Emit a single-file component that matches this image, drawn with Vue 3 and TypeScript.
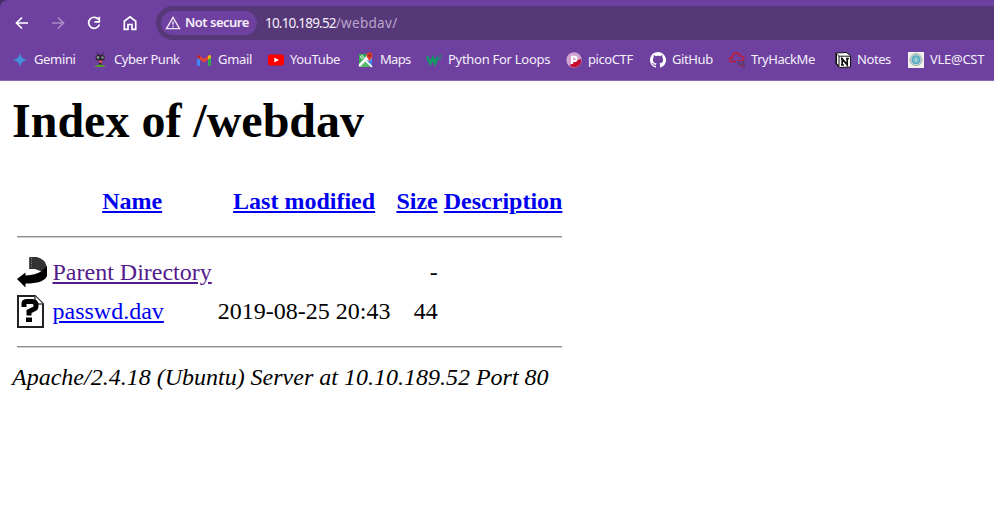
<script setup lang="ts">
interface Bookmark { label: string; icon: string; spacing: number }
const bookmarks: Bookmark[] = [
  { label: 'Gemini', icon: 'gemini', spacing: -0.35 },
  { label: 'Cyber Punk', icon: 'punk', spacing: -0.42 },
  { label: 'Gmail', icon: 'gmail', spacing: -0.3 },
  { label: 'YouTube', icon: 'youtube', spacing: -0.36 },
  { label: 'Maps', icon: 'maps', spacing: -0.7 },
  { label: 'Python For Loops', icon: 'w3', spacing: -0.28 },
  { label: 'picoCTF', icon: 'pico', spacing: -0.42 },
  { label: 'GitHub', icon: 'github', spacing: -0.38 },
  { label: 'TryHackMe', icon: 'thm', spacing: -0.45 },
  { label: 'Notes', icon: 'notion', spacing: -0.42 },
  { label: 'VLE@CST', icon: 'vle', spacing: -0.28 },
]
</script>

<template>
  <div class="window">
    <header class="chrome">
      <div class="toolbar">
        <nav class="controls">
          <svg viewBox="0 0 16 16"><path d="M14 8H3M8 2.5 2.5 8 8 13.5" /></svg>
          <svg class="disabled" viewBox="0 0 16 16"><path d="M2 8h11M8 2.5 13.5 8 8 13.5" /></svg>
          <svg viewBox="0 0 16 16"><path d="M12.8 4.8A5.500 5.500 0 1 0 13.400 9.500" /><path d="M13.300 1.800v5H8.500" /></svg>
          <svg viewBox="0 0 16 16"><path d="M2.300 6.200 8 1.900l5.700 4.300v8.200h-3.700V9.500H6v4.900H2.300z" /></svg>
        </nav>
        <div class="omnibox">
          <div class="chip">
            <svg viewBox="0 0 16 16"><path d="M8 2.300 14.500 13.600H1.500z" /><path d="M8 6.500v3.300M8 10.700v1.500" /></svg>
            <span>Not secure</span>
          </div>
          <div class="url">10.10.189.52<span>/webdav/</span></div>
        </div>
      </div>
      <div class="bookmarks">
        <div v-for="b in bookmarks" :key="b.label" class="bookmark">
          <svg viewBox="0 0 16 16">
            <path v-if="b.icon === 'gemini'" fill="#438fdc" d="M8 1c1 4.200 2.800 6 7 7-4.200 1-6 2.800-7 7-1-4.200-2.800-6-7-7 4.200-1 6-2.800 7-7z" />
            <g v-else-if="b.icon === 'punk'">
              <path d="M4.500 .5 7 3M12 .5 9.500 3" stroke="#291d35" />
              <path fill="#292531" d="M5 3h6l2 2-1 3-2 1v4H7V9L4 8 3.500 5z" />
              <circle cx="6" cy="5.500" r="1.400" fill="#8d8a92" /><circle cx="10.500" cy="5.500" r="1.300" fill="#8d8a92" />
              <path fill="#e45164" d="M6.500 8.500h4l-1 3-2-1z" /><path fill="#569d35" d="M3 14q5-3 10 0v1H3z" />
            </g>
            <g v-else-if="b.icon === 'gmail'">
              <path fill="#4285f4" d="M1 4.500V13q0 1 1 1h2V7z" /><path fill="#34a853" d="M12 7v7h2q1 0 1-1V4.500z" />
              <path fill="#ea4335" d="m4 4 4 3 4-3v3.500l-4 3-4-3z" /><path fill="#c5221f" d="M1 4.500Q1.500 2 4 4v3.500L1 5.400z" /><path fill="#fbbc04" d="M12 4q2.500-2 3 .5v.9l-3 2.100z" />
            </g>
            <g v-else-if="b.icon === 'youtube'"><rect y="2.500" width="16" height="11" rx="2" fill="#f00" /><path fill="#fff" d="m6.300 5.600 4.500 2.400-4.500 2.400z" /></g>
            <g v-else-if="b.icon === 'maps'">
              <rect x="1" y="2" width="13" height="13" rx="1.500" fill="#e8eaed" /><path fill="#34a853" d="M1 2h9L1 12z" /><path fill="#4285f4" d="m8 8 6 6v-8l-3 3z" /><path fill="#54b86a" d="m2 15 6-6 6 6z" /><path stroke="#fff" stroke-width="1.600" d="m1 14 10-10M7 8l7 7" />
              <path fill="#d83b30" d="M11.500 10C11 7 8.500 6 8.500 3.500a3 3 0 0 1 6 0c0 2.500-2.500 3.500-3 6.500z" /><circle cx="11.500" cy="3.600" r="1.100" fill="#8b1a1a" /><circle cx="4" cy="5" r="1.400" stroke="#fff" fill="none" stroke-width=".8" />
            </g>
            <g v-else-if="b.icon === 'w3'"><path d="m1 4.500 3.300 7L7 6l2 5.500 3-6.500" stroke="#119964" stroke-width="2.600" fill="none" /><path d="M13 3h2l-1 1.500 1 1.500-2 1" stroke="#119964" fill="none" /></g>
            <g v-else-if="b.icon === 'pico'"><circle cx="8" cy="8" r="7.700" fill="#d1a3d3" /><path fill="#c70b32" d="m4 13 7-5 4-1a7 7 0 0 1-11 7z" /><path d="M6 12V4.800h2.500a2 2 0 0 1 0 4.200H6" stroke="#fff" stroke-width="2" fill="none" /></g>
            <path v-else-if="b.icon === 'github'" fill="#fff" d="M8 0C3.580 0 0 3.580 0 8c0 3.540 2.290 6.530 5.470 7.590.4.070.55-.17.55-.38 0-.19-.01-.82-.01-1.490-2.010.37-2.530-.49-2.690-.94-.09-.23-.48-.94-.82-1.130-.28-.15-.68-.52-.01-.53.63-.01 1.080.58 1.230.82.72 1.210 1.870.87 2.330.66.07-.52.28-.87.51-1.070-1.780-.2-3.640-.89-3.640-3.950 0-.87.31-1.590.82-2.150-.08-.2-.36-1.020.08-2.120 0 0 .67-.21 2.200.82.64-.18 1.320-.27 2-.27s1.360.09 2 .27c1.530-1.040 2.200-.82 2.200-.82.44 1.100.16 1.920.08 2.120.51.56.82 1.270.82 2.150 0 3.070-1.870 3.750-3.650 3.950.29.25.54.73.54 1.480 0 1.070-.01 1.930-.01 2.200 0 .21.15.46.55.38A8 8 0 0 0 8 0z" />
            <g v-else-if="b.icon === 'thm'"><path d="M7 9.500H2.500a2 2 0 0 1 0-4c.500 0 1 .2 1 .2 0-3 1.500-4.700 3.500-4.700 2 0 3.500 1.200 4 3.200 2.500-.5 4 1 3.800 3-.2 1-1 1.300-2 1.300" stroke="#c01a31" stroke-width="1.400" fill="none" /><path d="M8 10.500h3M12 10.500h4M9 12.500h3M13 12.500h3M12 15h4" stroke="#513c6d" stroke-width="1.300" /><path d="M8 8.500h5M10 13.800h5" stroke="#b72542" /></g>
            <g v-else-if="b.icon === 'notion'"><path fill="#fff" stroke="#111" d="m.8 1 10.500-.5 4.200 3V15l-11 .5L.8 12z" /><path fill="#111" d="m1 1 3.500 3V15L1 12z" /><path fill="#fff" d="m2 2.500 1.500 1.600V13L2 11.500z" /><path stroke="#111" d="M4 4.200h11" /><path fill="none" stroke="#111" stroke-width="1.700" d="M7.200 13.500V6.800l5 6V6M6 6.800h2M6 13h3M11 6.500h3" /></g>
            <g v-else><path fill="#f2f2ec" d="M0 0h16v16H0z" /><circle cx="8" cy="7.700" r="6" fill="#c3d5d5" stroke="#a0b0af" /><circle cx="8" cy="7.700" r="4" fill="#70becd" stroke="#4da4b8" /><path d="M8 6v4" stroke="#bcd8d5" stroke-width="1.500" /></g>
          </svg>
          <span :style="{ letterSpacing: b.spacing + 'px' }">{{ b.label }}</span>
        </div>
      </div>
    </header>
    <main>
      <h1>Index of /webdav</h1>
      <table>
        <tbody>
          <tr class="head"><th></th><th><a href="#">Name</a></th><th><a href="#">Last modified</a></th><th><a href="#">Size</a></th><th><a href="#">Description</a></th></tr>
          <tr><th colspan="5"><hr></th></tr>
          <tr>
            <td><svg viewBox="0 0 30 33"><path fill="#333" d="M12 1h8q8 2 10 10l-4 5-8-3h-6z" /><path stroke="#999" stroke-width=".8" stroke-dasharray="1 1.500" d="M12.500 1v11M14.500 2v10" /><path d="m0 23 8.500-6.500v3q10-.5 15.500-4 3-2 6-5.500v10q-3 7.500-21.500 7.500v4z" /></svg></td>
            <td><a class="visited" href="#">Parent Directory</a></td><td></td><td class="right">-</td><td></td>
          </tr>
          <tr>
            <td><svg viewBox="0 0 30 33"><path d="M1 1h17l8 8v23H1z" fill="#fff" stroke="#222" stroke-width="2" /><path d="M18 1v8h8" fill="#fff" stroke="#444" stroke-width="1.500" /><path d="M7 12V8.500q0-2 3-2h5q4 0 4 3.500v1.500q0 2-3 3l-4 2v4" fill="none" stroke="#000" stroke-width="5" /><path d="M9 22.500h6V27H9z" /></svg></td>
            <td><a href="#">passwd.dav</a></td><td class="right">2019-08-25 20:43</td><td class="right">44</td><td></td>
          </tr>
          <tr><th colspan="5"><hr></th></tr>
        </tbody>
      </table>
      <address>Apache/2.4.18 (Ubuntu) Server at 10.10.189.52 Port 80</address>
    </main>
  </div>
</template>

<style>
body { margin: 0; background: #fff; }
</style>
<style scoped>
.window { height: 530px; overflow: hidden; font-family: "Liberation Serif", serif; font-size: 24px; color: #000; }
.chrome { box-sizing: border-box; height: 81px; background: #6e40a0; border-bottom: 1px solid #8d67b5; border-top-left-radius: 8px; box-shadow: -8px -8px 0 #482c65; padding-top: 6px; color: #f5f0fa; font-family: "Noto Sans", sans-serif; font-size: 13px; }
.toolbar { display: flex; height: 34px; padding-left: 14px; }
.controls { display: flex; width: 142px; gap: 20px; align-items: center; }
.controls svg { width: 16px; height: 16px; flex: none; fill: none; stroke: #fff; stroke-width: 1.7; }
.controls .disabled { opacity: .4; }
.omnibox { display: flex; flex: 1; align-items: center; background: #563777; border-radius: 17px 0 0 17px; padding-left: 5px; }
.chip { box-sizing: border-box; width: 96px; height: 24px; border-radius: 12px; background: #6e40a0; display: flex; align-items: center; gap: 4px; padding-left: 4px; font-weight: 600; white-space: nowrap; letter-spacing: -.5px; }
.chip span { padding-bottom: 2px; }
.chip svg { width: 16px; height: 16px; fill: none; stroke: #eee5f5; stroke-width: 1.4; }
.url { margin-left: 8px; font-size: 13.5px; letter-spacing: -.8px; }
.url span { color: #b9a5ce; letter-spacing: .3px; }
.bookmarks { display: grid; grid-template-columns: 80px 104px 72px 90px 68px 140px 84px 79px 106px 73px 86px; padding-left: 12px; height: 40px; align-items: center; }
.bookmark { display: flex; align-items: center; gap: 6px; white-space: nowrap; }
.bookmark span { padding-bottom: 2px; }
.bookmark svg { width: 16px; height: 16px; flex: none; fill: none; }
main { padding: 12px; }
h1 { margin: 0 0 32px; font-size: 48px; line-height: 55px; }
table { border-spacing: 3px; }
td, th { padding: 1.5px; line-height: 27px; }
.head th { height: 33px; }
td svg { display: block; width: 30px; height: 33px; }
hr { margin: 12px 0; border: 0 solid; border-width: 1px 0; border-color: #8f8f8f transparent #d0d0d0; }
a { color: #00e; }
.visited { color: #551a8b; }
.right { text-align: right; }
address { line-height: 27px; }
</style>
